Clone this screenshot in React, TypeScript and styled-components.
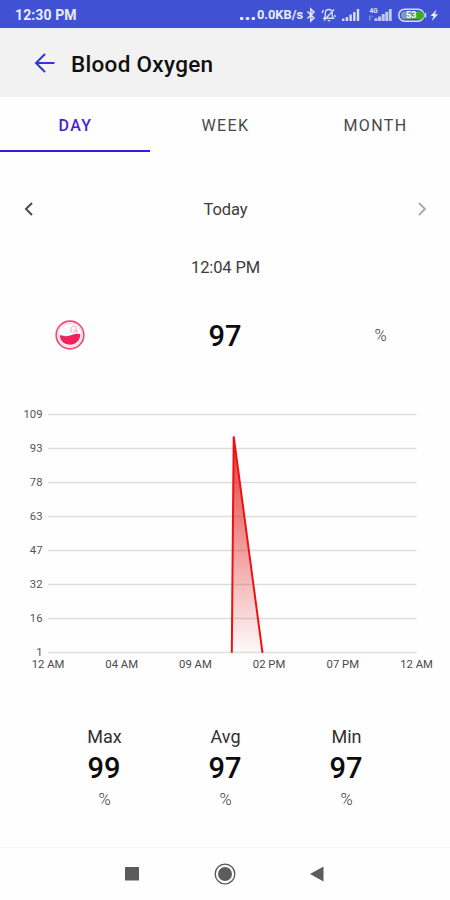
import React from "react";
import styled, { createGlobalStyle } from "styled-components";

const GlobalStyle = createGlobalStyle`
  * {
    box-sizing: border-box;
  }

  body {
    margin: 0;
    background: #fefefe;
    font-family: Roboto, sans-serif;
    color: #3c3c3c;
  }

  svg {
    display: block;
    flex-shrink: 0;
  }
`;

const Screen = styled.div`
  display: flex;
  flex-direction: column;
  width: 450px;
  height: 900px;
  overflow: hidden;
`;

const StatusBar = styled.div`
  display: flex;
  align-items: center;
  justify-content: space-between;
  height: 28px;
  padding: 1px 11px 0 15px;
  background: #4052d3;
  color: #e9ecfc;
`;

const Clock = styled.span`
  font-size: 14px;
  font-weight: 700;
  letter-spacing: 0.1px;
`;

const StatusIcons = styled.div`
  display: flex;
  align-items: center;
`;

const Speed = styled.span`
  margin-right: 2px;
  font-size: 12.8px;
  font-weight: 700;
`;

const Header = styled.header`
  display: flex;
  align-items: center;
  height: 69px;
  padding: 2px 0 0 34px;
  background: #f2f2f2;
`;

const Title = styled.h1`
  margin: 0 0 0 15px;
  font-size: 22.5px;
  font-weight: 500;
  letter-spacing: 0.3px;
  color: #101010;
`;

const Tabs = styled.nav`
  display: flex;
  height: 55px;
`;

const Tab = styled.button<{ $active?: boolean }>`
  flex: 1;
  padding: 3px 0 0 1px;
  border: none;
  border-bottom: 2px solid ${(p) => (p.$active ? "#4116d6" : "transparent")};
  background: transparent;
  font-family: inherit;
  font-size: 16px;
  font-weight: ${(p) => (p.$active ? 500 : 400)};
  letter-spacing: 1.4px;
  color: ${(p) => (p.$active ? "#4a1fd8" : "#484848")};
  cursor: pointer;
`;

const DateRow = styled.div`
  display: flex;
  align-items: center;
  justify-content: space-between;
  height: 24px;
  margin-top: 45px;
  padding: 0 22px 0 23px;
`;

const DateLabel = styled.span`
  font-size: 16.5px;
  letter-spacing: -0.1px;
`;

const Time = styled.div`
  margin-top: 35px;
  height: 24px;
  padding-left: 1px;
  line-height: 24px;
  font-size: 16.5px;
  letter-spacing: -0.15px;
  text-align: center;
`;

const Reading = styled.div`
  display: grid;
  grid-template-columns: 140px 170px 140px;
  align-items: center;
  justify-items: center;
  height: 40px;
  margin-top: 35px;
`;

const Value = styled.span`
  padding-top: 1px;
  font-size: 29px;
  line-height: 32px;
  font-weight: 500;
  color: #0c0c0c;
`;

const Unit = styled.span`
  padding: 1px 0 0 1px;
  font-size: 16.5px;
  line-height: 20px;
  font-weight: 300;
  color: #3c3c3c;
`;

const ChartBox = styled.div`
  height: 280px;
  margin-top: 40px;
`;

const Summary = styled.div`
  display: grid;
  grid-template-columns: repeat(3, 121px);
  justify-content: center;
  margin-top: 51px;
`;

const Stat = styled.div`
  display: flex;
  flex-direction: column;
  align-items: center;
`;

const StatLabel = styled.span`
  padding-left: 1px;
  font-size: 18px;
  line-height: 22px;
  color: #303030;
`;

const StatValue = styled(Value)`
  margin: 3px 0 5px;
`;

const SystemNav = styled.footer`
  display: flex;
  align-items: center;
  justify-content: space-between;
  height: 53px;
  margin-top: auto;
  padding: 0 125px 0 124px;
  border-top: 1px solid #f4f4f4;
`;

const gridValues = [109, 93, 78, 63, 47, 32, 16, 1];
const hours = ["12 AM", "04 AM", "09 AM", "02 PM", "07 PM", "12 AM"];

const stats = [
  { label: "Max", value: 99 },
  { label: "Avg", value: 97 },
  { label: "Min", value: 97 },
];

function StatusGlyphs() {
  return (
    <svg width="134" height="20" viewBox="305 4 134 20" fill="none">
      {/* bluetooth */}
      <path d="M307.5 10.5l6.5 6.5-3.2 3V8l3.2 3-6.5 6.5" stroke="#e4e8fb" strokeWidth="1.5" />
      {/* muted bell */}
      <path
        d="M324 17.2h9.6l-1.3-2.2v-2.6c0-2.6-1.6-3.9-3.5-3.9s-3.5 1.3-3.5 3.9V15zM327.6 19.6h2.6M324 19.5l10-11M322 12l1.5-3M335.5 16l-1-2"
        stroke="#d5daf6"
        strokeWidth="1.4"
      />
      {/* signal bars */}
      <g fill="#d8ddf7">
        <rect x="342" y="17.6" width="2.4" height="2.4" />
        <rect x="345.7" y="16" width="2.4" height="4" />
        <rect x="349.4" y="13.5" width="2.4" height="6.5" />
        <rect x="353.1" y="11" width="2.4" height="9" />
        <rect x="356.8" y="8" width="2.4" height="12" />
      </g>
      <g fill="#c3caf2">
        <rect x="374.5" y="17.2" width="3" height="2.8" />
        <rect x="378.1" y="15.5" width="3" height="4.5" />
        <rect x="381.7" y="13" width="3" height="7" />
        <rect x="385.3" y="10.8" width="3" height="9.2" />
        <rect x="388.9" y="8" width="2.8" height="12" />
        <path d="M369 14.5h1.5v5H369zM371.5 14l1.5 1.5-1.5 1.5z" opacity="0.5" />
      </g>
      <text x="369.5" y="12.4" fontSize="6.5" fontWeight="700" fill="#dfe3fa">4G</text>
      {/* battery */}
      <rect x="398.8" y="8.2" width="25" height="12" rx="5.8" stroke="#d4daf7" strokeWidth="1.6" />
      <path d="M425.4 11.8v4.8" stroke="#d4daf7" strokeWidth="1.6" />
      <path d="M401 14.2a3.9 3.9 0 0 1 3.9-3.9H414v7.8h-9.1a3.9 3.9 0 0 1-3.9-3.9z" fill="#7c9fae" />
      <path d="M412 10.3h8.1a3.9 3.9 0 0 1 0 7.8H412z" fill="#3bad2c" />
      <text x="406" y="17.4" fontSize="9" fontWeight="700" fill="#fff">53</text>
      {/* charging */}
      <path d="M436.5 8.5l-6 6.6h3l-1.6 4.9 6.2-6.8h-3.2z" fill="#e9ecfd" />
    </svg>
  );
}

function OxygenIcon() {
  return (
    <svg width="32" height="32" viewBox="0 0 32 32" fill="none">
      <circle cx="16" cy="16" r="13.8" stroke="#ee4777" strokeWidth="1.7" />
      <circle cx="16" cy="16" r="11.8" stroke="#fbc5d4" strokeWidth="0.9" />
      <path
        d="M5.8 16.2c2.5-.4 5 1.4 8.2.9 3.6-.6 7.2-3.2 12.3-1.9 0 6.1-4.5 10.5-10.2 10.5S6 22 5.8 16.2z"
        fill="#f3205e"
      />
      <path
        d="M18.3 13.8c-1.7-.5-2-2.7-.8-4.2.2-3.2 3.6-3.6 4.4-.8.9 1.3.9 2.6.5 4.2M20.3 13.7c-1.2-.9-.7-2.7.8-2.8 1.6.1 2.3 1.8 1.7 3"
        stroke="#f493ae"
        strokeWidth="0.9"
      />
    </svg>
  );
}

function OxygenChart() {
  const top = 19.5;
  const step = 34;

  return (
    <svg width="450" height="280" viewBox="0 0 450 280">
      <defs>
        <linearGradient id="oxygenFill" x1="0" y1="0" x2="0" y2="1">
          <stop offset="0" stopColor="#e11414" stopOpacity="0.85" />
          <stop offset="1" stopColor="#e11414" stopOpacity="0.02" />
        </linearGradient>
      </defs>
      {gridValues.map((value, i) => (
        <g key={value}>
          <line x1="48" x2="416.5" y1={top + i * step} y2={top + i * step} stroke="#dedede" strokeWidth="1.4" />
          <text x="42.5" y={top + i * step + 3.7} fontSize="11.3" textAnchor="end" fill="#555">
            {value}
          </text>
        </g>
      ))}
      <path d="M231.8 257.5L233.7 41.5L262.5 257.5z" fill="url(#oxygenFill)" />
      <path d="M231.8 257.8L233.7 41.5L262.5 257.8" fill="none" stroke="#ec1212" strokeWidth="2" strokeLinejoin="bevel" />
      {hours.map((hour, i) => (
        <text key={i} x={48 + i * 73.7} y="272.7" fontSize="11.3" textAnchor="middle" fill="#4a4a4a">
          {hour}
        </text>
      ))}
    </svg>
  );
}

export default function App() {
  return (
    <Screen>
      <GlobalStyle />
      <StatusBar>
        <Clock>12:30 PM</Clock>
        <StatusIcons>
          <svg width="17" height="14" viewBox="0 0 17 14" fill="#e9ecfc">
            <rect x="0" y="9" width="3.4" height="3" rx="1" />
            <rect x="5.8" y="9" width="3.4" height="3" rx="1" />
            <rect x="11.6" y="9" width="3.4" height="3" rx="1" />
          </svg>
          <Speed>0.0KB/s</Speed>
          <StatusGlyphs />
        </StatusIcons>
      </StatusBar>
      <Header>
        <svg width="22" height="22" viewBox="0 0 22 22" fill="none" stroke="#3038cf" strokeWidth="2">
          <path d="M20.5 10H2.5M11 1L2 10l9 9" />
        </svg>
        <Title>Blood Oxygen</Title>
      </Header>
      <Tabs>
        <Tab $active>DAY</Tab>
        <Tab>WEEK</Tab>
        <Tab>MONTH</Tab>
      </Tabs>
      <DateRow>
        <svg width="12" height="16" viewBox="0 0 12 16" fill="none" stroke="#4c4c4c" strokeWidth="2">
          <path d="M9 2L3 8l6 6" />
        </svg>
        <DateLabel>Today</DateLabel>
        <svg width="12" height="16" viewBox="0 0 12 16" fill="none" stroke="#a8a8a8" strokeWidth="1.8">
          <path d="M3 2l6 6-6 6" />
        </svg>
      </DateRow>
      <Time>12:04 PM</Time>
      <Reading>
        <OxygenIcon />
        <Value>97</Value>
        <Unit>%</Unit>
      </Reading>
      <ChartBox>
        <OxygenChart />
      </ChartBox>
      <Summary>
        {stats.map((stat) => (
          <Stat key={stat.label}>
            <StatLabel>{stat.label}</StatLabel>
            <StatValue>{stat.value}</StatValue>
            <Unit>%</Unit>
          </Stat>
        ))}
      </Summary>
      <SystemNav>
        <svg width="16" height="16" viewBox="0 0 16 16">
          <rect x="1" y="1" width="14" height="13.5" fill="#5c5c5c" />
        </svg>
        <svg width="22" height="22" viewBox="0 0 22 22">
          <circle cx="11" cy="11" r="9.8" fill="none" stroke="#555" strokeWidth="1.3" />
          <circle cx="11" cy="11" r="7" fill="#5c5c5c" />
        </svg>
        <svg width="16" height="16" viewBox="0 0 16 16">
          <path d="M1 8L14.5 0.5v15z" fill="#5c5c5c" />
        </svg>
      </SystemNav>
    </Screen>
  );
}
